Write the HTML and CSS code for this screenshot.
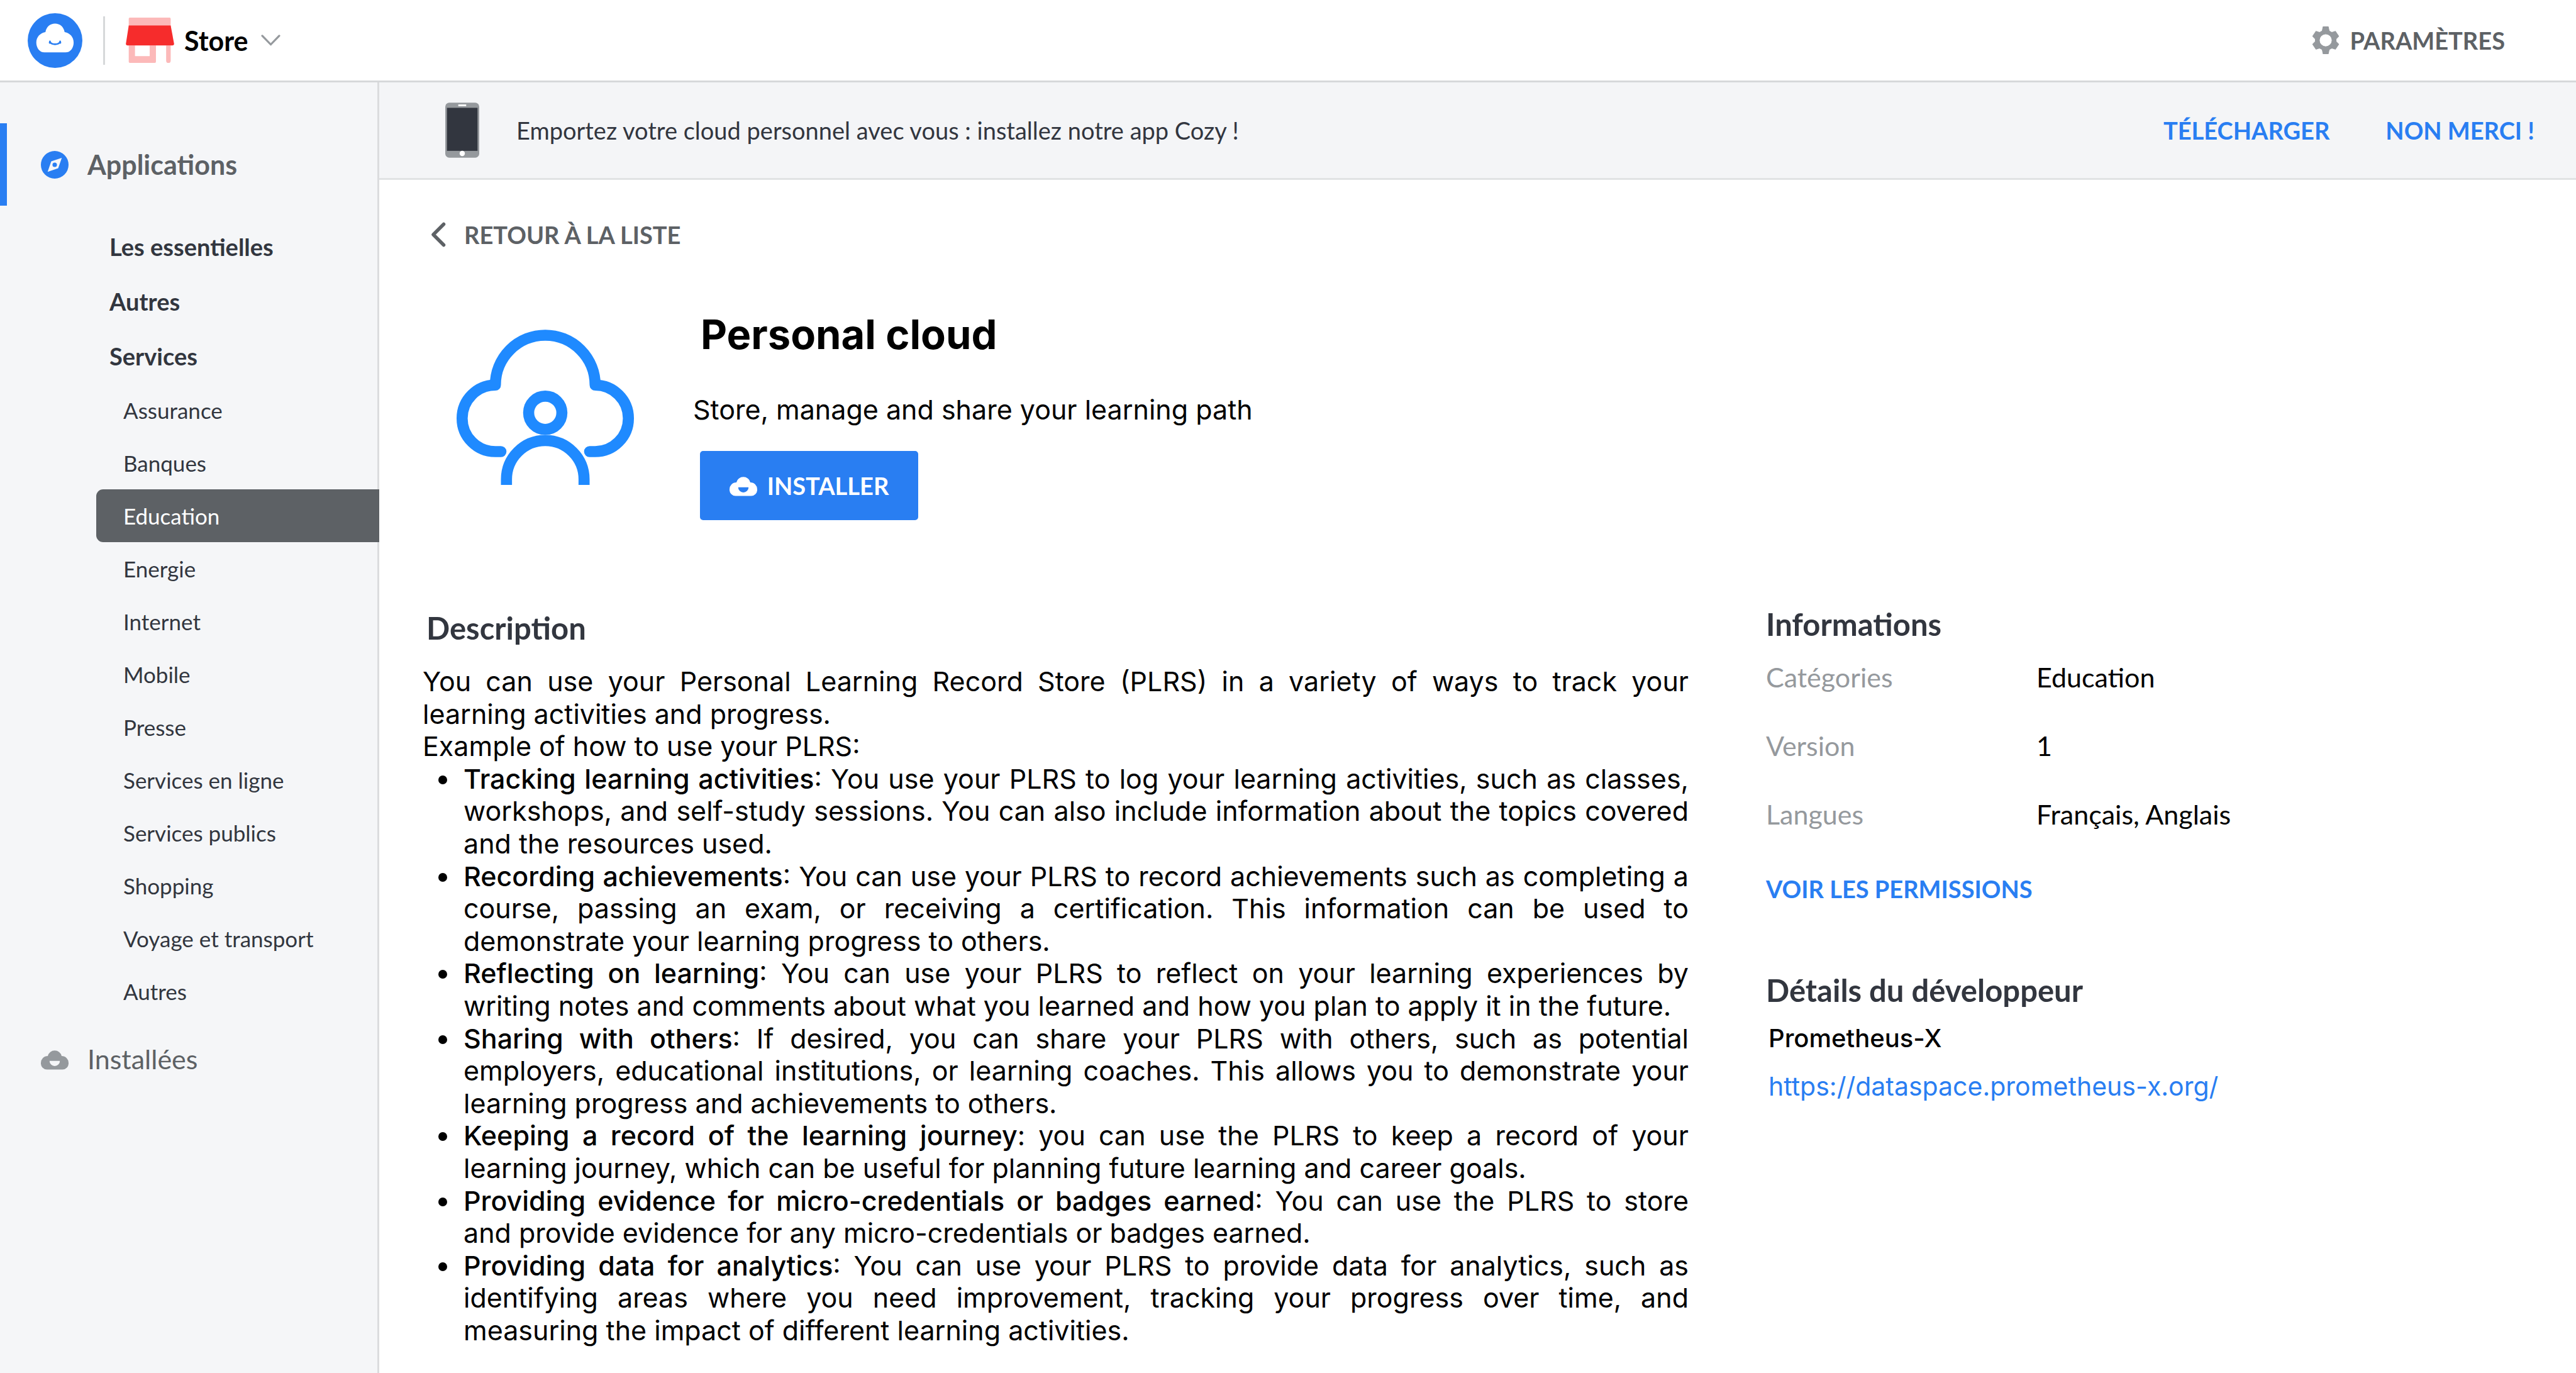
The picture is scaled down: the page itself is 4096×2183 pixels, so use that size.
FILE: index.html
```html
<!DOCTYPE html>
<html lang="fr">
<head>
<meta charset="utf-8">
<title>Cozy Store</title>
<link rel="stylesheet" href="styles.css">
</head>
<body>
<header class="topbar">
  <a class="logo" href="#" aria-label="Cozy">
    <svg viewBox="0 0 97 97"><circle cx="48.500" cy="48.500" r="48.500" fill="#297ef2"/><path d="M30 69.500C21 69.500 15.300 61 15.300 52C15.300 42 22 35.500 31.500 33.500C33 24 40 18.300 48.500 18.300C57 18.300 64 24 65.500 33.500C75 35.500 81.500 42 81.500 52C81.500 61 76 69.500 67 69.500Z" fill="#fff"/><path d="M39.500 50L39 52.500M57.500 50L58 52.500M40.500 52C43 56 54 56 56.500 52" fill="none" stroke="#297ef2" stroke-width="3" stroke-linecap="round"/></svg>
  </a>
  <span class="divider"></span>
  <button class="app-switch" type="button">
    <svg class="store-icon" viewBox="0 0 85 81"><path d="M5 2a2 2 0 0 1 2-2H77a2 2 0 0 1 2 2V16H5ZM5 49H53V78a2 2 0 0 1-2 2H7a2 2 0 0 1-2-2ZM16 49V68H42V49ZM71 49H79V76a4 4 0 0 1-8 0Z" fill="#fcb9b9" fill-rule="evenodd"/><path d="M5 14H79L85 46a3 3 0 0 1-3 3H3a3 3 0 0 1-3-3Z" fill="#f62c2c"/></svg>
    <span>Store</span>
    <svg class="caret" viewBox="0 0 34 20"><path d="M2 2L17 17.500L32 2" fill="none" stroke="#95999d" stroke-width="3.500" stroke-linecap="round" stroke-linejoin="round"/></svg>
  </button>
  <button class="settings" type="button">
    <svg class="icon" viewBox="0 0 16 16"><path d="M6.500 .2H9.500L10 2.600L11.600 3.500L13.600 2.800L15.500 5.700L14 7.200V8.800L15.500 10.300L13.600 13.200L11.600 12.500L10 13.400L9.500 15.800H6.500L6 13.400L4.400 12.500L2.400 13.200L.5 10.300L2 8.800V7.200L.5 5.700L2.400 2.800L4.400 3.500L6 2.600ZM8 4.300A3.700 3.700 0 1 0 8 11.700A3.700 3.700 0 1 0 8 4.300Z" fill="#95999d" fill-rule="evenodd" stroke="#95999d" stroke-width=".4" stroke-linejoin="round"/></svg>
    <span>PARAMÈTRES</span>
  </button>
</header>
<div class="layout">
  <nav class="sidebar">
    <a class="section active" href="#"><svg class="icon" viewBox="0 0 16 16"><path d="M8 0A8 8 0 1 0 8 16A8 8 0 1 0 8 0ZM12.100 4L10 10L3.900 12.100L6 6ZM8 6.700A1.300 1.300 0 1 0 8 9.300A1.300 1.300 0 1 0 8 6.700Z" fill="#297ef2" fill-rule="evenodd"/></svg><span>Applications</span></a>
    <ul class="groups">
      <li><a href="#">Les essentielles</a></li>
      <li><a href="#">Autres</a></li>
      <li><a href="#">Services</a></li>
    </ul>
    <ul class="items">
      <li><a href="#">Assurance</a></li>
      <li><a href="#">Banques</a></li>
      <li><a class="selected" href="#">Education</a></li>
      <li><a href="#">Energie</a></li>
      <li><a href="#">Internet</a></li>
      <li><a href="#">Mobile</a></li>
      <li><a href="#">Presse</a></li>
      <li><a href="#">Services en ligne</a></li>
      <li><a href="#">Services publics</a></li>
      <li><a href="#">Shopping</a></li>
      <li><a href="#">Voyage et transport</a></li>
      <li><a href="#">Autres</a></li>
    </ul>
    <a class="section" href="#"><svg class="icon" viewBox="0 0 16 16"><path d="M3.500 14A3.500 3.500 0 0 1 0 10.300A4 4 0 0 1 4 6.200A4.100 4.100 0 0 1 12 6.200A4 4 0 0 1 16 10.300A3.500 3.500 0 0 1 12.500 14ZM5 9A3 3 0 0 0 11 9Z" fill="#95999d" fill-rule="evenodd"/></svg><span>Installées</span></a>
  </nav>
  <main class="content">
    <div class="banner">
      <svg class="phone" viewBox="0 0 60 97"><rect width="60" height="97" rx="7" fill="#95999d"/><rect x="3" y="9" width="54" height="76" fill="#32363f"/><rect x="23" y="3" width="14" height="3" fill="#fff"/><circle cx="30" cy="89.500" r="4.700" fill="#fff"/></svg>
      <p>Emportez votre cloud personnel avec vous : installez notre app Cozy !</p>
      <button class="text-button" type="button">TÉLÉCHARGER</button>
      <button class="text-button" type="button">NON MERCI !</button>
    </div>
    <a class="back" href="#"><svg viewBox="0 0 24 40"><path d="M20.500 3.500L4 20L20.500 36.500" fill="none" stroke="#5d6165" stroke-width="5.500" stroke-linecap="round" stroke-linejoin="round"/></svg><span>RETOUR À LA LISTE</span></a>
    <section class="hero">
      <svg class="app-logo" viewBox="0 0 16 14" fill="none" stroke="#1f8aff" stroke-linejoin="round"><path d="M4 11H3.500A3 3 0 0 1 3.500 5A4.500 4.500 0 0 1 12.500 5A3 3 0 0 1 12.500 11H12" stroke-linecap="round"/><circle cx="8" cy="7.500" r="1.500"/><path d="M4.500 14V13.500A3.500 3.500 0 0 1 11.500 13.500V14"/></svg>
      <div class="hero-text">
        <h1>Personal cloud</h1>
        <p>Store, manage and share your learning path</p>
        <button class="install" type="button"><svg class="icon" viewBox="0 0 16 16"><path d="M3.500 14A3.500 3.500 0 0 1 0 10.300A4 4 0 0 1 4 6.200A4.100 4.100 0 0 1 12 6.200A4 4 0 0 1 16 10.300A3.500 3.500 0 0 1 12.500 14ZM5 9A3 3 0 0 0 11 9Z" fill="#fff" fill-rule="evenodd"/></svg><span>INSTALLER</span></button>
      </div>
    </section>
    <div class="details">
      <section class="description">
        <h2>Description</h2>
        <p>You can use your Personal Learning Record Store (PLRS) in a variety of ways to track your learning&nbsp;activities and progress.</p>
        <p>Example of how to use your PLRS:</p>
        <ul>
          <li><b>Tracking learning activities</b>: You use your PLRS to log your learning activities, such as classes, workshops, and self-study sessions. You can also include information about the topics covered and the resources used.</li>
          <li><b>Recording achievements</b>: You can use your PLRS to record achievements such as completing a course, passing an exam, or receiving a certification. This information can be used to demonstrate your learning progress to others.</li>
          <li><b>Reflecting on learning</b>: You can use your PLRS to reflect on your learning experiences by writing notes and comments about what you learned and how you plan to apply it in the future.</li>
          <li><b>Sharing with others</b>: If desired, you can share your PLRS with others, such as potential employers, educational institutions, or learning coaches. This allows you to demonstrate your learning progress and achievements to others.</li>
          <li><b>Keeping a record of the learning journey</b>: you can use the PLRS to keep a record of your learning journey, which can be useful for planning future learning and career goals.</li>
          <li><b>Providing evidence for micro-credentials or badges earned</b>: You can use the PLRS to store and&nbsp;provide evidence for any micro-credentials or badges earned.</li>
          <li><b>Providing data for analytics</b>: You can use your PLRS to provide data for analytics, such as identifying areas where you need improvement, tracking your progress over time, and measuring the impact of different learning activities.</li>
        </ul>
      </section>
      <aside class="infos">
        <h2>Informations</h2>
        <dl>
          <dt>Catégories</dt><dd>Education</dd>
          <dt>Version</dt><dd>1</dd>
          <dt>Langues</dt><dd>Français, Anglais</dd>
        </dl>
        <button class="text-button permissions" type="button">VOIR LES PERMISSIONS</button>
        <h2>Détails du développeur</h2>
        <p class="developer">Prometheus-X</p>
        <a class="developer link" href="https://dataspace.prometheus-x.org/">https://dataspace.prometheus-x.org/</a>
      </aside>
    </div>
  </main>
</div>
</body>
</html>
```
FILE: styles.css
```css
* { box-sizing: border-box; }
body, h1, h2, p, ul, dl, dd { margin: 0; padding: 0; }
body {
  min-height: 100vh;
  display: flex;
  flex-direction: column;
  background: #fff;
  color: #32363f;
  font-family: Lato, "Liberation Sans", sans-serif;
  font-size: 38px;
}
a { color: inherit; text-decoration: none; }
button {
  padding: 0;
  border: 0;
  background: none;
  color: inherit;
  font: inherit;
  cursor: pointer;
}
svg { display: block; flex: none; }
.icon { width: 44px; height: 44px; }

.topbar {
  height: 131px;
  display: flex;
  align-items: center;
  padding: 0 113px 0 44px;
  border-bottom: 3px solid #d6d8da;
}
.logo svg { width: 87px; height: 87px; }
.divider { width: 3px; height: 77px; margin: 0 33px; background: #d6d8da; }
.app-switch {
  display: flex;
  align-items: center;
  color: #000;
  font-size: 43px;
  font-weight: 700;
}
.store-icon { width: 77px; height: 73px; margin-right: 16px; }
.caret { width: 31px; height: 18px; margin-left: 20px; }
.settings {
  display: flex;
  align-items: center;
  gap: 16px;
  margin-left: auto;
  color: #5d6165;
  font-weight: 700;
}

.layout { flex: 1; display: flex; }
.sidebar {
  flex: none;
  width: 603px;
  padding-top: 65px;
  border-right: 3px solid #dbdcde;
  background: #f5f6f8;
}
.sidebar ul { list-style: none; }
.section {
  height: 131px;
  display: flex;
  align-items: center;
  gap: 30px;
  padding-left: 65px;
  color: #5d6165;
  font-size: 43px;
}
.section.active {
  padding-left: 54px;
  border-left: 11px solid #297ef2;
  font-weight: 700;
}
.groups { margin-top: 22px; }
.groups a {
  display: block;
  padding-left: 174px;
  font-weight: 700;
  line-height: 87px;
}
.items { margin-left: 153px; }
.items a {
  display: block;
  padding-left: 43px;
  font-size: 35px;
  line-height: 84px;
}
.items .selected {
  margin-right: -3px;
  border-radius: 11px 0 0 11px;
  background: #5d6165;
  color: #fff;
}

.content { flex: 1; min-width: 0; }
.banner {
  height: 155px;
  display: flex;
  align-items: center;
  gap: 59px;
  padding: 0 66px 0 105px;
  border-bottom: 3px solid #e1e3e4;
  background: #f4f5f7;
}
.banner p { flex: 1; }
.banner .text-button { margin-left: 30px; }
.phone { width: 54px; height: 88px; }
.text-button { color: #297ef2; font-weight: 700; }
.back {
  width: fit-content;
  display: flex;
  align-items: center;
  gap: 29px;
  margin: 64px 0 0 82px;
  color: #5d6165;
  font-weight: 700;
  line-height: 46px;
}
.back svg { width: 24px; height: 40px; }

.hero { display: flex; gap: 94px; margin: 80px 0 0 123px; }
.app-logo { width: 282px; height: 247px; margin-top: 48px; }
.hero-text {
  display: flex;
  flex-direction: column;
  align-items: flex-start;
  color: #000;
  font-family: Inter, "Liberation Sans", sans-serif;
}
.hero-text h1 { margin: 16px 0 0 12px; font-size: 65px; font-weight: 700; line-height: 80px; }
.hero-text p { margin-top: 53px; font-size: 43px; line-height: 52px; }
.install {
  width: 347px;
  height: 110px;
  display: flex;
  align-items: center;
  justify-content: center;
  gap: 16px;
  margin: 40px 0 0 11px;
  border-radius: 5px;
  background: #297ef2;
  color: #fff;
  font-family: Lato, "Liberation Sans", sans-serif;
  font-weight: 700;
}

.details {
  display: grid;
  grid-template-columns: 2013px 1fr;
  column-gap: 123px;
  margin: 135px 0 0 69px;
}
h2 { font-size: 49px; font-weight: 700; line-height: 60px; }
.description h2 { margin: 6px 0 30px 6px; }
.description p, .description ul {
  color: #000;
  font-family: Inter, "Liberation Sans", sans-serif;
  font-size: 43px;
  line-height: 1.2;
  text-align: justify;
}
.description ul { padding-left: 60px; }
.description li { padding-left: 5px; }
.description b { font-weight: 500; }
.infos dl {
  display: grid;
  grid-template-columns: 430px 1fr;
  font-size: 43px;
  line-height: 109px;
}
dt { color: #95999d; }
dd { color: #000; }
.permissions { display: block; margin: 41px 0 108px; }
.developer {
  margin: 15px 0 0 4px;
  color: #000;
  font-family: Inter, "Liberation Sans", sans-serif;
  font-size: 40px;
  font-weight: 500;
  line-height: 64px;
}
.developer.link {
  display: block;
  margin-top: 12px;
  color: #297ef2;
  font-size: 41px;
  font-weight: 400;
}
```
